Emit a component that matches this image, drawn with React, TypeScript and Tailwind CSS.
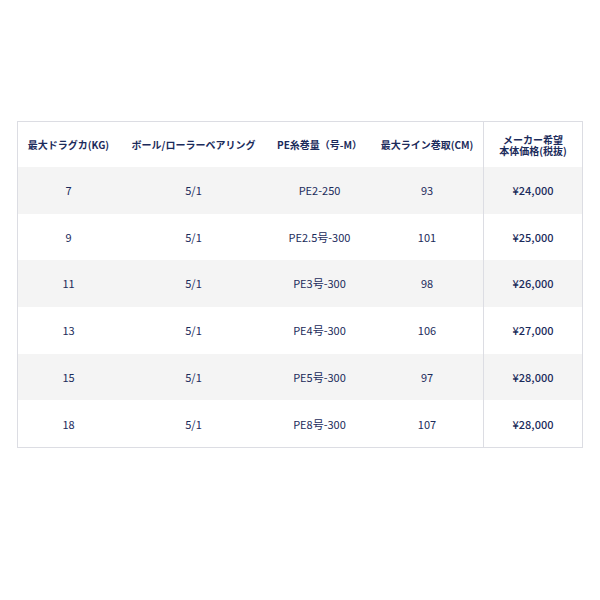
const rows = [
  ["7", "5/1", "PE2-250", "93", "¥24,000"],
  ["9", "5/1", "PE2.5号-300", "101", "¥25,000"],
  ["11", "5/1", "PE3号-300", "98", "¥26,000"],
  ["13", "5/1", "PE4号-300", "106", "¥27,000"],
  ["15", "5/1", "PE5号-300", "97", "¥28,000"],
  ["18", "5/1", "PE8号-300", "107", "¥28,000"],
];

const cols = "grid grid-cols-[101px_149px_103px_112px_1fr]";

export default function App() {
  return (
    <div className="w-[600px] h-[600px] bg-white pt-[121px] pl-[17px] font-['Noto_Sans_CJK_JP','Noto_Sans',sans-serif] text-[#1b2b5b]">
      <div className="w-[566px] border border-[#dcdde3]">
        <div className={`${cols} h-[45px] items-center text-center text-[10px] font-bold leading-[12px]`}>
          <span>最大ドラグカ(KG)</span>
          <span>ボール/ローラーベアリング</span>
          <span>PE糸巻量（号-M）</span>
          <span>最大ライン巻取(CM)</span>
          <span className="h-full flex flex-col justify-center border-l border-[#dcdde3] leading-[11px]">
            <span>メーカー希望</span>
            <span>本体価格(税抜)</span>
          </span>
        </div>
        {rows.map((r, i) => (
          <div
            key={i}
            className={`${cols} h-[46.7px] items-center text-center text-[11px] ${i % 2 === 0 ? "bg-[#f4f4f4]" : "bg-white"}`}
          >
            <span>{r[0]}</span>
            <span>{r[1]}</span>
            <span>{r[2]}</span>
            <span>{r[3]}</span>
            <span className="h-full flex items-center justify-center border-l border-[#dcdde3] font-medium">{r[4]}</span>
          </div>
        ))}
      </div>
    </div>
  );
}
